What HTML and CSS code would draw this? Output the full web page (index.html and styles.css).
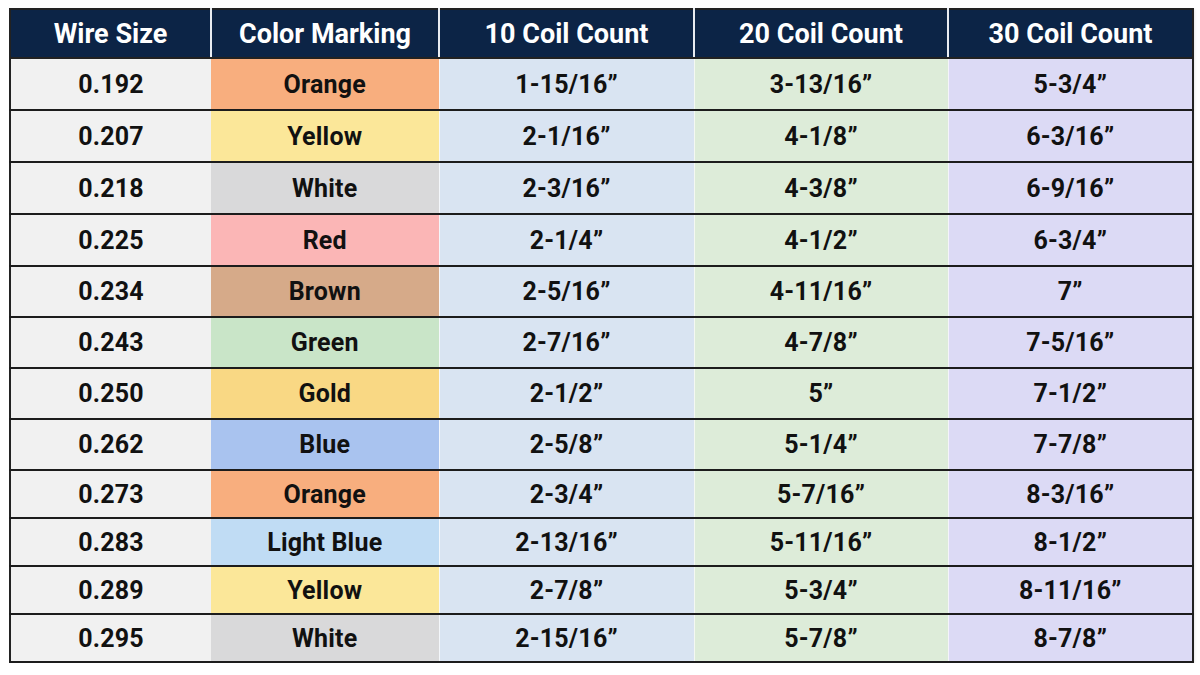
FILE: index.html
```html
<!DOCTYPE html>
<html>
<head>
<meta charset="utf-8">
<link rel="stylesheet" href="styles.css">
</head>
<body>
<table class="coil">
  <colgroup>
    <col class="c1"><col class="c2"><col class="c3"><col class="c4"><col class="c5">
  </colgroup>
  <thead>
    <tr><th>Wire Size</th><th>Color Marking</th><th>10 Coil Count</th><th>20 Coil Count</th><th>30 Coil Count</th></tr>
  </thead>
  <tbody>
    <tr><td class="size">0.192</td><td class="mk orange">Orange</td><td class="k10">1-15/16”</td><td class="k20">3-13/16”</td><td class="k30">5-3/4”</td></tr>
    <tr><td class="size">0.207</td><td class="mk yellow">Yellow</td><td class="k10">2-1/16”</td><td class="k20">4-1/8”</td><td class="k30">6-3/16”</td></tr>
    <tr><td class="size">0.218</td><td class="mk white">White</td><td class="k10">2-3/16”</td><td class="k20">4-3/8”</td><td class="k30">6-9/16”</td></tr>
    <tr><td class="size">0.225</td><td class="mk red">Red</td><td class="k10">2-1/4”</td><td class="k20">4-1/2”</td><td class="k30">6-3/4”</td></tr>
    <tr><td class="size">0.234</td><td class="mk brown">Brown</td><td class="k10">2-5/16”</td><td class="k20">4-11/16”</td><td class="k30">7”</td></tr>
    <tr><td class="size">0.243</td><td class="mk green">Green</td><td class="k10">2-7/16”</td><td class="k20">4-7/8”</td><td class="k30">7-5/16”</td></tr>
    <tr><td class="size">0.250</td><td class="mk gold">Gold</td><td class="k10">2-1/2”</td><td class="k20">5”</td><td class="k30">7-1/2”</td></tr>
    <tr><td class="size">0.262</td><td class="mk blue">Blue</td><td class="k10">2-5/8”</td><td class="k20">5-1/4”</td><td class="k30">7-7/8”</td></tr>
    <tr><td class="size">0.273</td><td class="mk orange">Orange</td><td class="k10">2-3/4”</td><td class="k20">5-7/16”</td><td class="k30">8-3/16”</td></tr>
    <tr><td class="size">0.283</td><td class="mk lblue">Light Blue</td><td class="k10">2-13/16”</td><td class="k20">5-11/16”</td><td class="k30">8-1/2”</td></tr>
    <tr><td class="size">0.289</td><td class="mk yellow">Yellow</td><td class="k10">2-7/8”</td><td class="k20">5-3/4”</td><td class="k30">8-11/16”</td></tr>
    <tr><td class="size">0.295</td><td class="mk white">White</td><td class="k10">2-15/16”</td><td class="k20">5-7/8”</td><td class="k30">8-7/8”</td></tr>
  </tbody>
</table>
</body>
</html>
```
FILE: styles.css
```css
html, body {
  background: #ffffff;
}
body {
  margin: 8px 0 0 9px;
  font-family: Roboto, "Liberation Sans", sans-serif;
}
.coil {
  width: 1183px;
  table-layout: fixed;
  border-collapse: collapse;
  border: 2px solid #222222;
  box-shadow: 0 1px 3px rgba(0,0,0,0.15);
}
.c1 { width: 201px; }
.c2 { width: 228px; }
.c3 { width: 255px; }
.c4 { width: 254px; }
.c5 { width: 245px; }

th {
  background: #0c2446;
  color: #ffffff;
  font-size: 27px;
  font-weight: 700;
  letter-spacing: 0;
  height: 47px;
  padding: 0;
  text-align: center;
  border-left: 2px solid #e8ecf2;
  border-bottom: 2px solid #222222;
}
th:first-child { border-left: none; }

td {
  font-size: 25px;
  font-weight: 700;
  color: #111111;
  text-align: center;
  padding: 0;
  border-bottom: 2px solid #1c1c1c;
  letter-spacing: 0.2px;
}
tbody tr { height: 51px; }
tbody tr:nth-child(-n+4) { height: 52px; }
tbody tr:nth-child(n+9) { height: 48px; }

.size { background: #f1f1f1; }
.mk { border-left: none; }
.k10 { background: #d9e4f2; border-left: 1px solid #f4f7fb; }
.k20 { background: #ddecd9; border-left: 1px solid #f4f8f2; }
.k30 { background: #dcdaf5; border-left: 1px solid #f4f3fb; }

.orange { background: #f8ae7e; }
.yellow { background: #fbe799; }
.white  { background: #d9d9da; }
.red    { background: #fbb6b6; }
.brown  { background: #d6aa89; }
.green  { background: #c9e5c8; }
.gold   { background: #f9d884; }
.blue   { background: #a9c3ef; }
.lblue  { background: #c0dcf4; }
```
